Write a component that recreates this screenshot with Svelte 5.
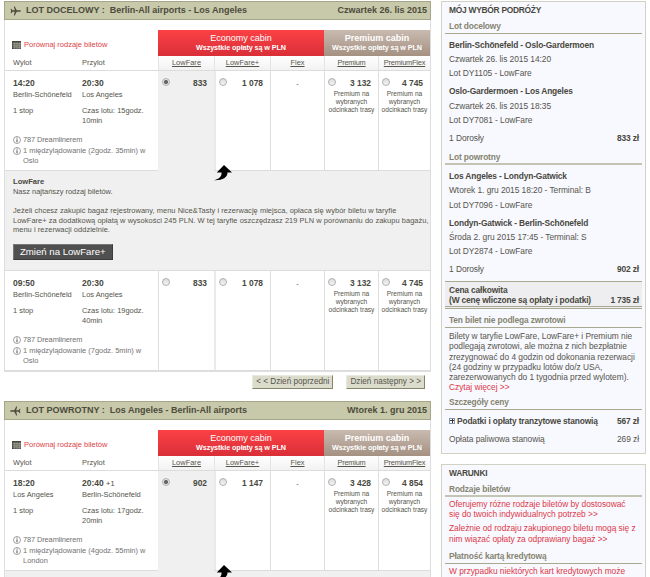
<script lang="ts">
  type Fare = { price: string; note?: string };
  type Flight = {
    dep: string; arr: string; plus?: string; from: string; to: string;
    time: string[]; stop: string[]; fares: Fare[]; selected?: number; upgrade?: string;
  };

  const premiumNote = 'Premium na wybranych odcinkach trasy';
  const columns = ['LowFare', 'LowFare+', 'Flex', 'Premium', 'PremiumFlex'];

  function fares(...prices: string[]): Fare[] {
    return prices.map((price, i) => ({ price, note: i > 2 ? premiumNote : undefined }));
  }

  const outbound: Flight[] = [
    {
      dep: '14:20', arr: '20:30', from: 'Berlin-Schönefeld', to: 'Los Angeles',
      time: ['Czas lotu: 15godz.', '10min'], stop: ['1 międzylądowanie (2godz. 35min) w', 'Oslo'],
      fares: fares('833', '1 078', '-', '3 132', '4 745'), selected: 0, upgrade: 'LowFare+'
    },
    {
      dep: '09:50', arr: '20:30', from: 'Berlin-Schönefeld', to: 'Los Angeles',
      time: ['Czas lotu: 19godz.', '40min'], stop: ['1 międzylądowanie (7godz. 5min) w', 'Oslo'],
      fares: fares('833', '1 078', '-', '3 132', '4 745')
    }
  ];
  const inbound: Flight[] = [
    {
      dep: '18:20', arr: '20:40', plus: '+1', from: 'Los Angeles', to: 'Berlin-Schönefeld',
      time: ['Czas lotu: 17godz.', '20min'], stop: ['1 międzylądowanie (4godz. 55min) w', 'London'],
      fares: fares('902', '1 147', '-', '3 428', '4 854'), selected: 0
    }
  ];

  const trips = [
    {
      title: 'Lot docelowy', price: '833 zł',
      legs: [
        ['Berlin-Schönefeld - Oslo-Gardermoen', 'Czwartek 26. lis 2015 14:20', 'Lot DY1105 - LowFare'],
        ['Oslo-Gardermoen - Los Angeles', 'Czwartek 26. lis 2015 18:35', 'Lot DY7081 - LowFare']
      ]
    },
    {
      title: 'Lot powrotny', price: '902 zł',
      legs: [
        ['Los Angeles - Londyn-Gatwick', 'Wtorek 1. gru 2015 18:20 - Terminal: B', 'Lot DY7096 - LowFare'],
        ['Londyn-Gatwick - Berlin-Schönefeld', 'Środa 2. gru 2015 17:45 - Terminal: S', 'Lot DY2874 - LowFare']
      ]
    }
  ];
</script>

{#snippet infoIcon()}
  <svg class="info-icon" viewBox="0 0 10 10">
    <circle cx="5" cy="5" r="4.4" fill="#fff" stroke="#6c6c6c" stroke-width=".8" />
    <path d="M5 2v1.200M5 4.200v3.600" fill="none" stroke="#444" stroke-width="1.2" />
  </svg>
{/snippet}

{#snippet legTable(label: string, route: string, date: string, flights: Flight[], back: boolean)}
  <section class="leg">
    <header class="bar">
      <svg class="plane" class:back viewBox="0 0 22 20">
        <path d="M22 10c0-1-1.500-1.400-3-1.400h-5.500L9.500 1H7.600l2 7.600H5L2.500 5.500H1.200L2.300 10l-1.100 4.500h1.300L5 11.400h4.600L7.600 19h1.900l4-7.600H19c1.500 0 3-.4 3-1.400z" fill="#4c4c3c" />
      </svg>
      <span class="label">{label} :</span>
      <span>{route}</span>
      <span class="date">{date}</span>
    </header>
    <div class="table">
      <div class="grid head">
        <a class="compare" href="#compare">
          <svg viewBox="0 0 18 16">
            <path d="M0 0h18v16H0z" fill="#454538" />
            <path d="M4.500 3v13M8.200 3v13M11.900 3v13M15.600 3v13M1 4.500h17M1 8.300h17M1 12.100h17" stroke="#ddddd0" stroke-width=".9" />
          </svg>
          Porównaj rodzaje biletów
        </a>
        <div class="cabin economy"><b>Economy cabin</b><small>Wszystkie opłaty są w PLN</small></div>
        <div class="cabin premium"><b>Premium cabin</b><small>Wszystkie opłaty są w PLN</small></div>
      </div>
      <div class="grid names">
        <div class="cols"><span>Wylot</span><span>Przylot</span></div>
        {#each columns as name, i}
          <div class="name" class:tight={i > 2}><a href="#fare">{name}</a></div>
        {/each}
      </div>
      {#each flights as f}
        <div class="grid flight">
          <div class="details">
            <div class="cols">
              <div><strong>{f.dep}</strong><p>{f.from}</p><p class="gap">1 stop</p></div>
              <div>
                <strong>{f.arr} {#if f.plus}<i>{f.plus}</i>{/if}</strong><p>{f.to}</p>
                <p class="gap">{f.time[0]}<br />{f.time[1]}</p>
              </div>
            </div>
            <div class="info">{@render infoIcon()}<span class="plane-type">787 Dreamlinerem</span></div>
            <div class="info">{@render infoIcon()}<span>{f.stop[0]}<br />{f.stop[1]}</span></div>
          </div>
          {#each f.fares as fare, i}
            <div class="fare" class:selected={f.selected === i}>
              {#if fare.price === '-'}
                <span class="none">-</span>
              {:else}
                <div class="choice"><span class="radio" class:on={f.selected === i}></span><b>{fare.price}</b></div>
              {/if}
              {#if fare.note}<p class="note">{fare.note}</p>{/if}
            </div>
          {/each}
        </div>
        {#if f.selected !== undefined}
          <div class="offer">
            <svg class="arrow" viewBox="0 0 18 16">
              <path d="M10 0l8 7.500h-4.500C13.500 12.500 8.500 15.500 0 15.200c5-1.200 7.600-3.200 7.600-7.700H2.800z" fill="#000" />
            </svg>
            {#if f.upgrade}
              <b>LowFare</b>
              <p>Nasz najtańszy rodzaj biletów.</p>
              <p class="text">Jeżeli chcesz zakupić bagaż rejestrowany, menu Nice&amp;Tasty i rezerwację miejsca, opłaca się wybór biletu w taryfie<br />LowFare+ za dodatkową opłatą w wysokości 245 PLN. W tej taryfie oszczędzasz 219 PLN w porównaniu do zakupu bagażu,<br />menu i rezerwacji oddzielnie.</p>
              <button class="change">Zmień na {f.upgrade}</button>
            {/if}
          </div>
        {/if}
      {/each}
    </div>
  </section>
{/snippet}

<div class="page">
  <main>
    {@render legTable('LOT DOCELOWY', 'Berlin-All airports - Los Angeles', 'Czwartek 26. lis 2015', outbound, false)}
    <nav>
      <button>&lt; &lt; Dzień poprzedni</button>
      <button>Dzień następny &gt; &gt;</button>
    </nav>
    {@render legTable('LOT POWROTNY', 'Los Angeles - Berlin-All airports', 'Wtorek 1. gru 2015', inbound, true)}
  </main>

  <aside>
    <section class="box trip-box">
      <h2>MÓJ WYBÓR PODRÓŻY</h2>
      {#each trips as trip, i}
        <h3 class:thick={i === 1}>{trip.title}</h3>
        {#each trip.legs as leg}
          <div class="segment"><b>{leg[0]}</b><span>{leg[1]}</span><span>{leg[2]}</span></div>
        {/each}
        <div class="row"><span>1 Dorosły</span><b>{trip.price}</b></div>
      {/each}
      <div class="total">
        <b>Cena całkowita<br />(W cenę wliczone są opłaty i podatki)</b>
        <b>1 735 zł</b>
      </div>
      <h3>Ten bilet nie podlega zwrotowi</h3>
      <p>Bilety w taryfie LowFare, LowFare+ i Premium nie<br />podlegają zwrotowi, ale można z nich bezpłatnie<br />zrezygnować do 4 godzin od dokonania rezerwacji<br />(24 godziny w przypadku lotów do/z USA,<br />zarezerwowanych do 1 tygodnia przed wylotem).<br /><a href="#more">Czytaj więcej &gt;&gt;</a></p>
      <h3 class="prices">Szczegóły ceny</h3>
      <div class="row taxes"><b><span class="plus"></span>Podatki i opłaty tranzytowe stanowią</b><b>567 zł</b></div>
      <div class="row"><span>Opłata paliwowa stanowią</span><span>269 zł</span></div>
    </section>
    <section class="box terms">
      <h2>WARUNKI</h2>
      <h3 class="thick">Rodzaje biletów</h3>
      <p><a href="#types">Oferujemy różne rodzaje biletów by dostosować<br />się do twoich indywidualnych potrzeb &gt;&gt;</a></p>
      <p><a href="#bags">Zależnie od rodzaju zakupionego biletu mogą się z<br />nim wiązać opłaty za odprawiany bagaż &gt;&gt;</a></p>
      <h3 class="card">Płatność kartą kredytową</h3>
      <p><a href="#cards">W przypadku niektórych kart kredytowych może</a></p>
    </section>
  </aside>
</div>

<style>
  :global(body) { background: #fff; }
  * { box-sizing: border-box; }
  .page {
    width: 650px; height: 577px; overflow: hidden; display: flex; gap: 10px; padding: 1px 4px 0;
    font: 7.45px/9.7px "Liberation Sans", Arial, sans-serif; color: #55554c; white-space: nowrap;
  }
  p, h2, h3 { margin: 0; }
  button { font-family: inherit; border-radius: 0; white-space: nowrap; }
  main { width: 427px; flex: none; }
  b, strong { color: #484840; }

  .bar {
    display: flex; align-items: center; height: 19px; padding: 0 3px 0 5px;
    background: #c8c8aa; border: 1px solid #a5a588; font-size: 9px; font-weight: bold; color: #4c4c3c;
  }
  .plane { width: 11px; height: 10px; margin-right: 5px; }
  .plane.back { transform: scaleX(-1); }
  .label { margin-right: 5px; }
  .date { margin-left: auto; }
  .table { border: 1px solid #dedede; border-top: 0; }
  .grid { display: grid; grid-template-columns: 153px 56px 56px 54px 54px 52px; }
  .head { height: 36px; padding-top: 10px; }
  .compare {
    display: flex; align-items: center; gap: 3px; padding: 3px 0 0 7px; color: #dc3f48;
    text-decoration: none; font-size: 7.5px;
  }
  .compare svg { width: 9px; height: 8px; }
  .cabin {
    display: flex; flex-direction: column; align-items: center; justify-content: center;
    font-size: 9px; line-height: 10px; color: #fff;
  }
  .cabin b { font-weight: normal; color: #fff; }
  .cabin small { font-size: 7.2px; font-weight: bold; letter-spacing: -.08px; }
  .economy { grid-column: 2 / 5; background: linear-gradient(#fb4145, #d92f38); }
  .premium { grid-column: 5 / 7; background: linear-gradient(#c9bab0, #a49182); }
  .premium b { font-weight: bold; }
  .names { height: 15px; line-height: 14px; border-bottom: 1px solid #dcdcdc; background: linear-gradient(90deg, #fff 153px, transparent 153px), linear-gradient(#fff, #f2f2f2); }
  .cols { display: grid; grid-template-columns: 69px 1fr; padding-left: 8px; }
  .name { text-align: center; font-size: 7.4px; letter-spacing: .05px; border-left: 1px solid #e4e4e4; }
  .name.tight { letter-spacing: -.2px; }
  .name a { color: #55554c; text-underline-offset: 1px; }

  .flight { height: 100px; border-bottom: 1px solid #dcdcdc; }
  .details { padding-top: 6px; }
  .details strong { display: block; font-size: 8.5px; line-height: 13px; }
  .details i { font-style: normal; font-weight: normal; font-size: 7.4px; }
  .details .gap { margin-top: 6.5px; }
  .details .cols { height: 57.5px; }
  .info { display: flex; gap: 2px; padding-left: 8px; margin-bottom: 2px; color: #737373; }
  .info-icon { width: 8px; height: 8px; margin-top: 1px; }
  .plane-type { letter-spacing: -.12px; }
  .fare { border-left: 1px solid #dedede; }
  .fare:nth-child(3) { border-left-width: 2px; border-color: #eaeaea; }
  .selected { background: #f0f0f0; margin-bottom: -1px; border-color: #f0f0f0; }
  .choice { display: flex; justify-content: space-between; padding: 6px 7px 0 3px; font-size: 8.4px; line-height: 13px; }
  .radio {
    width: 8px; height: 8px; margin-top: 1px; border: 1px solid #b0b0b0; border-radius: 50%;
    background: linear-gradient(#ddd, #f4f4f4);
  }
  .radio.on { background: radial-gradient(circle, #666 0 1.6px, #e8e8e8 2.4px); }
  .none { display: block; padding-top: 8px; text-align: center; }
  .note { width: 50px; margin: 0 auto; font-size: 6.6px; line-height: 8.2px; text-align: center; white-space: normal; }

  .offer { position: relative; height: 100px; padding: 6px 8px 0; background: #f0f0f0; border-bottom: 1px solid #dcdcdc; }
  .offer b { font-size: 7.6px; }
  .offer .text { margin-top: 9.5px; letter-spacing: .05px; }
  .arrow { position: absolute; left: 209px; top: -6px; width: 18px; height: 16px; }
  .change {
    display: block; height: 16px; margin-top: 9px; padding: 0 6px; background: #505050; border: 1px solid #777;
    border-right-color: #3c3c3c; border-bottom-color: #3c3c3c; color: #fff; font-size: 9.6px; line-height: 14px;
  }
  nav { display: flex; justify-content: flex-end; gap: 13px; height: 29px; padding: 3px 6px 0 0; }
  nav button {
    height: 14px; padding: 0 3px; background: #dcdccc; border: 1px solid; border-color: #e9e9df #85856b #85856b #e9e9df;
    font-size: 8.2px; line-height: 12px; color: #55554c;
  }

  .box {
    width: 205px; padding: 0 3px; background: #f8f8ff; border: 1px solid #d2d2c4;
    font-size: 8.4px; letter-spacing: -.05px; line-height: 10.2px;
  }
  .box b, .box h3 { letter-spacing: -.15px; }
  .trip-box { height: 453px; }
  h2 { height: 16px; padding-left: 4px; font-size: 8.4px; line-height: 16px; color: #484840; letter-spacing: -.25px; }
  h3 { height: 16px; padding-left: 4px; border-bottom: 1px solid #a9a992; font-size: 8.4px; line-height: 16px; color: #85856f; }
  h3.thick { border-bottom: 2px solid #c4c4b2; }
  .trip-box h3.thick { margin-top: 3.5px; }
  .segment { display: flex; flex-direction: column; padding: 3.6px 4px 0; line-height: 14.4px; }
  .row { display: flex; justify-content: space-between; padding: 3.6px 3px 0 4px; line-height: 14.4px; }
  .total {
    display: flex; justify-content: space-between; align-items: flex-end; height: 28px; margin-top: 4.5px; padding: 0 3px 1px 4px;
    background: #eeeef0; border-top: 1px solid #a9a992; border-bottom: 3px double #a9a992;
  }
  .total + h3 { margin-top: 3px; }
  .box p { padding: 3px 0 0 4px; letter-spacing: -.03px; }
  .box p a { color: #dd3848; text-decoration: none; }
  h3.prices { margin-top: 1.5px; }
  .plus {
    display: inline-block; width: 6px; height: 6px; margin-right: 2px; border: 1px solid #8295ad;
    background: linear-gradient(#333, #333) center / 4px 1px no-repeat, linear-gradient(#333, #333) center / 1px 4px no-repeat, #fff;
  }
  .taxes { padding-top: 4px; }
  .terms { height: 130px; margin-top: 10px; }
  .terms h3 + p { padding-top: 2px; }
  .terms p + p { padding-top: 4px; }
  h3.card { margin-top: 4.5px; }
</style>
